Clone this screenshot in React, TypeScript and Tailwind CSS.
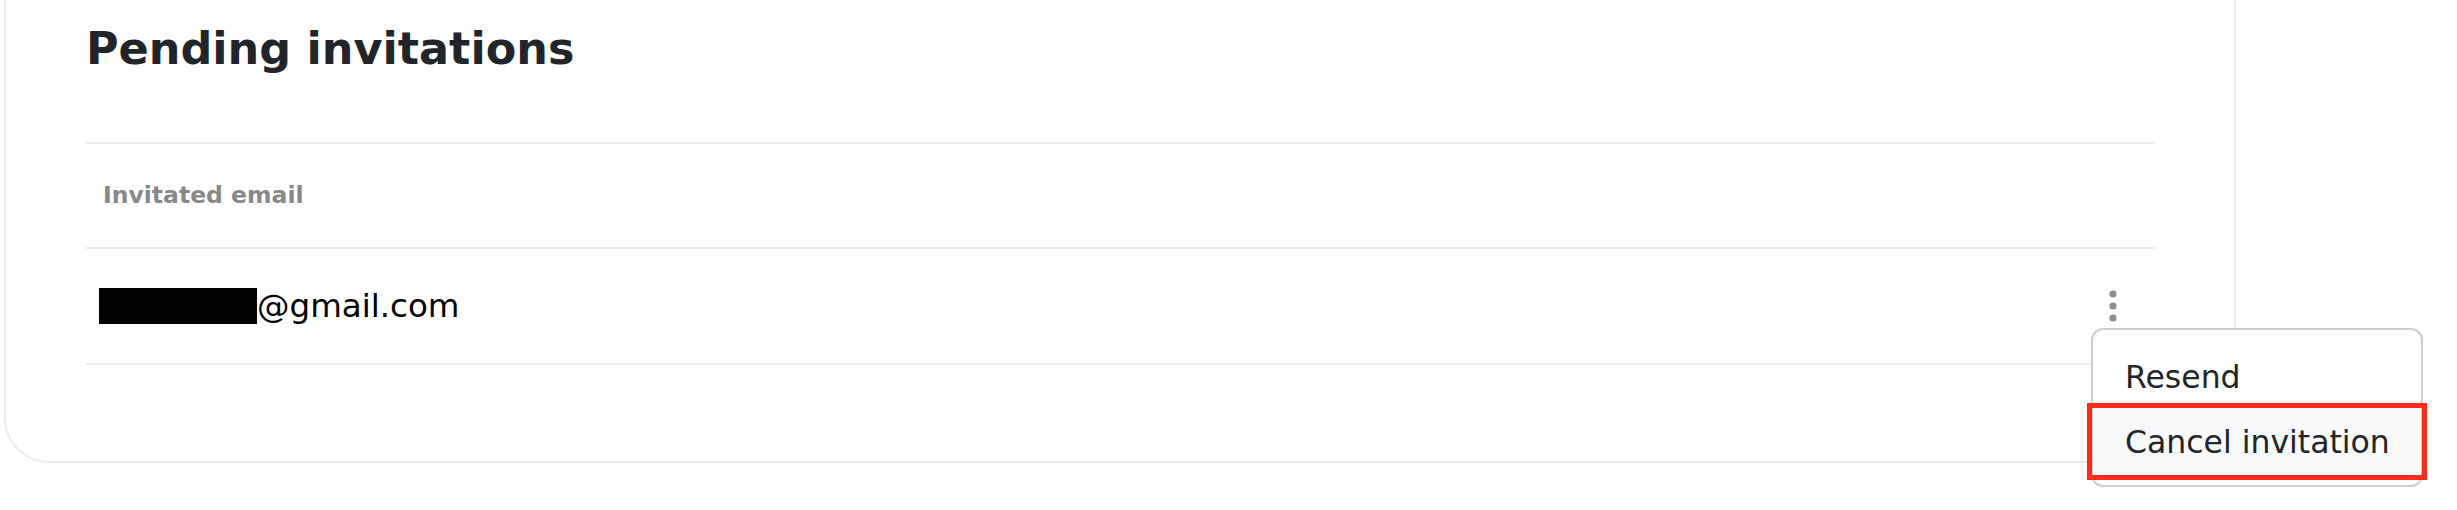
const invites = [{ id: 'inv-1', domain: '@gmail.com' }]

function KebabDots() {
  return (
    <svg width="8" height="32" viewBox="0 0 8 32" className="block">
      <circle cx="4" cy="4" r="3.6" fill="#8e8e8e" />
      <circle cx="4" cy="16" r="3.6" fill="#8e8e8e" />
      <circle cx="4" cy="28" r="3.6" fill="#8e8e8e" />
    </svg>
  )
}

function ActionsMenu() {
  return (
    <div className="absolute left-[2091px] top-[328px] w-[332px] rounded-[12px] border-2 border-[#cfcfcf] bg-white pb-[12px] text-[31.5px] leading-[32px] whitespace-nowrap text-[#212529]">
      <div className="px-[32px] pt-[31px] pb-[12px]">Resend</div>
      <div className="bg-[#f8f9fa] px-[32px] pt-[21px] pb-[15px]">Cancel invitation</div>
    </div>
  )
}

export default function App() {
  return (
    <div className="relative h-[510px] w-[2457px] overflow-hidden bg-white font-['DejaVu_Sans',sans-serif]">
      {/* Card */}
      <div className="ml-[4px] mt-[-60px] w-[2232px] rounded-[45px] border-2 border-[#ececec] pl-[80px] pr-[79px] pt-[84px] pb-[96px]">
        <h2 className="text-[44.5px] font-bold leading-[45px] text-[#212529]">Pending invitations</h2>

        <div className="mt-[71px] border-t-2 border-[#ececec]">
          <div className="flex h-[105px] items-center border-b-2 border-[#ececec] pl-[17px]">
            <span className="text-[23.5px] font-bold text-[#888888]">Invitated email</span>
          </div>

          {invites.map((row) => (
            <div key={row.id} className="flex h-[116px] items-center justify-between border-b-2 border-[#ececec] pl-[13px] pr-[38px]">
              <div className="flex items-center text-[32.5px] leading-[36px] text-black">
                <span className="h-[36px] w-[158px] bg-black" />
                <span>{row.domain}</span>
              </div>
              <KebabDots />
            </div>
          ))}
        </div>
      </div>

      <ActionsMenu />

      {/* Annotation */}
      <div className="absolute left-[2087px] top-[403px] h-[77px] w-[340px] border-[5px] border-[#ff2a1c]" />
    </div>
  )
}
